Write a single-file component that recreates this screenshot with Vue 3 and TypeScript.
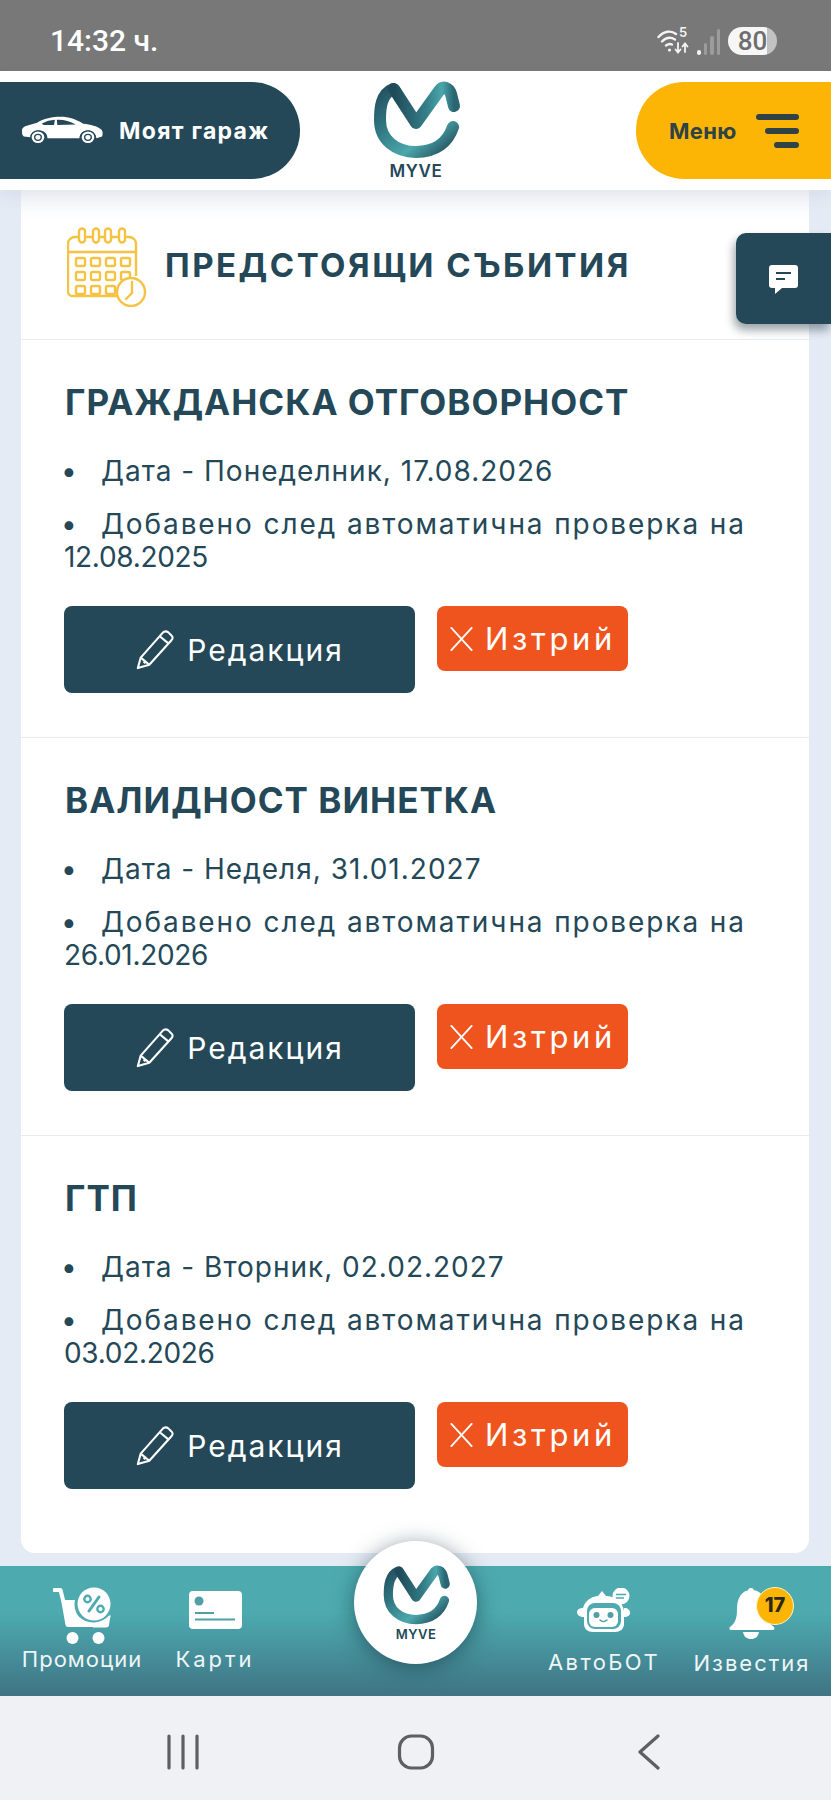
<template>
  <div class="phone" lang="bg">
    <svg class="defs" width="0" height="0" aria-hidden="true">
      <defs>
        <linearGradient id="myve-arc" x1="0" y1="0" x2="1" y2="1">
          <stop offset="0" stop-color="#24505f" />
          <stop offset="0.3" stop-color="#2f7480" />
          <stop offset="0.68" stop-color="#4ba8ab" />
          <stop offset="1" stop-color="#1f4656" />
        </linearGradient>
        <linearGradient id="myve-v" x1="0" y1="0" x2="1" y2="0">
          <stop offset="0" stop-color="#1f4a59" />
          <stop offset="0.55" stop-color="#35808a" />
          <stop offset="0.8" stop-color="#4aa6aa" />
          <stop offset="1" stop-color="#2a6572" />
        </linearGradient>
        <symbol id="myve-logo" viewBox="0 1 130 119">
          <path class="logo-stroke" stroke="url(#myve-arc)" d="M42 19C30 24 29 38 29 50C29 70 45 82 65 82C85 82 97 72 102 57" />
          <path class="logo-stroke" stroke="url(#myve-v)" d="M43 19L65 53L88 21C92 15 98 18 100 24L103 36" />
          <text class="logo-word" x="65" y="107" text-anchor="middle">MYVE</text>
        </symbol>
      </defs>
    </svg>

    <div class="status-bar">
      <span class="clock">14:32 ч.</span>
      <div class="status-icons">
        <svg class="wifi" width="34" height="26" viewBox="0 0 34 26" fill="none" stroke="#f4f4f4" stroke-linecap="round">
          <path stroke-width="2.4" d="M1.5 9C7 3 14 2 19 6" />
          <path stroke-width="2.4" d="M5 13.5C9 9.500 14 9 18 11.500" />
          <path stroke-width="2.4" d="M9 17.500C11 16 13 15.500 15 16.500" />
          <circle cx="12.500" cy="22" r="1.600" fill="#f4f4f4" stroke="none" />
          <path stroke-width="1.800" d="M21 15V24M18.500 21.500L21 24.500L23.500 21.500M28 24V16M25.500 18.500L28 15.500L30.500 18.500" />
        </svg>
        <span class="wifi-five">5</span>
        <div class="signal">
          <i class="bar bar-on" style="height: 5px"></i>
          <i class="bar" style="height: 12px"></i>
          <i class="bar" style="height: 19px"></i>
          <i class="bar" style="height: 26px"></i>
        </div>
        <div class="battery">80</div>
      </div>
    </div>

    <header class="top-bar">
      <button type="button" class="garage-btn">
        <svg width="83" height="29" viewBox="0 0 88 34" preserveAspectRatio="none">
          <path fill="#fff" d="M1 17C1 14 3 12 7 11L17 8C24 3 33 1 42 1C51 1 58 4 66 9C74 10 81 12 84 15C87 17 87 21 86 24L80 26C79 20 75 17 71 17C66 17 62 21 62 26H28C28 20 24 17 19 17C14 17 11 20 10 25L3 24C1 22 1 20 1 17Z" />
          <path fill="#244858" d="M22 9C27 6 31 5 36 4.500L35 10.500H24ZM38 4.400C45 4 52 6 58 10L38.500 10.500Z" />
          <circle cx="18" cy="25" r="7.500" fill="#fff" stroke="#244858" stroke-width="1.500" />
          <circle cx="18" cy="25" r="3.500" fill="none" stroke="#244858" stroke-width="1.500" />
          <circle cx="71" cy="25" r="7.500" fill="#fff" stroke="#244858" stroke-width="1.500" />
          <circle cx="71" cy="25" r="3.500" fill="none" stroke="#244858" stroke-width="1.500" />
        </svg>
        <span>Моят гараж</span>
      </button>
      <svg class="header-logo" width="130" height="119"><use href="#myve-logo" /></svg>
      <button type="button" class="menu-btn">
        <span>Меню</span>
        <span class="burger"><i class="b1"></i><i class="b2"></i><i class="b3"></i></span>
      </button>
    </header>

    <main class="content">
      <section class="card">
        <div class="card-head">
          <svg width="80" height="80" viewBox="0 0 80 80" fill="none" stroke="#f5c242" stroke-width="2.400">
            <path d="M12 10H8C4 10 1 13 1 17V65C1 67 3 69 5 69H50" />
            <path d="M1 25H69V49M69 25V17C69 13 66 10 62 10H58" />
            <path d="M18 10H26M32 10H38M44 10H52" />
            <rect x="12" y="1.500" width="6" height="14" rx="3" />
            <rect x="26" y="1.500" width="6" height="14" rx="3" />
            <rect x="38" y="1.500" width="6" height="14" rx="3" />
            <rect x="52" y="1.500" width="6" height="14" rx="3" />
            <g v-for="cell in calendarCells" :key="cell.x + '-' + cell.y">
              <rect :x="cell.x" :y="cell.y" width="9" height="8" rx="1.500" />
            </g>
            <circle cx="64" cy="65" r="14" fill="#fff" />
            <path stroke-linecap="round" d="M65 55V66L59 72" />
          </svg>
          <h1>ПРЕДСТОЯЩИ СЪБИТИЯ</h1>
        </div>

        <article v-for="item in events" :key="item.title" class="event">
          <h2>{{ item.title }}</h2>
          <ul>
            <li class="date-line">Дата - {{ item.date }}</li>
            <li class="check-line">Добавено след автоматична проверка на <span class="check-date">{{ item.added }}</span></li>
          </ul>
          <div class="actions">
            <button type="button" class="edit-btn">
              <svg width="40" height="40" viewBox="0 0 40 42" fill="none" stroke="#fff" stroke-width="2.200" stroke-linejoin="round">
                <path d="M2 40L5 29L28 3C30 1 32 1 34 2.500L37 5.500C39 7 39 9 37 11L14 36.500Z" />
                <path d="M5 29L14 36.500M25 6.500L34 14M8 33L10 35" />
              </svg>
              <span>Редакция</span>
            </button>
            <button type="button" class="delete-btn">
              <svg width="25" height="24" viewBox="0 0 26 26" stroke="#fff" stroke-width="2" stroke-linecap="round">
                <path d="M2 1L24 25M24 1L2 25" />
              </svg>
              <span>Изтрий</span>
            </button>
          </div>
        </article>
      </section>

      <button type="button" class="chat-tab" aria-label="Чат">
        <svg width="30" height="30" viewBox="0 0 30 30">
          <path fill="#fff" d="M3 1H26C28 1 29 2 29 4V21C29 23 28 24 26 24H13L6 30V24H3C1 24 0 23 0 21V4C0 2 1 1 3 1Z" />
          <path stroke="#244858" stroke-width="2" d="M7 9H22M7 15H16" />
        </svg>
      </button>
    </main>

    <nav class="bottom-nav">
      <a class="nav-item">
        <svg class="nav-icon" width="58" height="57" viewBox="0 0 58 57">
          <path fill="none" stroke="#fff" stroke-width="4" stroke-linecap="round" stroke-linejoin="round" d="M1.500 3H7.500L10 13" />
          <path fill="#fff" d="M8 13H40V40H15C13.500 40 13 39 12.500 38ZM40 30L57.500 28L56 38C56 39.500 55 40.500 53 40.500H40Z" />
          <circle cx="41" cy="17.500" r="19.500" fill="#4dabb0" />
          <circle cx="41" cy="17" r="16.500" fill="#fff" />
          <path fill="none" stroke="#4dabb0" stroke-width="3" d="M36 24L46 10" stroke-linecap="round" />
          <circle cx="34.500" cy="12" r="3.200" fill="none" stroke="#4dabb0" stroke-width="2.400" />
          <circle cx="47.500" cy="22" r="3.200" fill="none" stroke="#4dabb0" stroke-width="2.400" />
          <path fill="none" stroke="#fff" stroke-width="2" d="M26 31C34 39 49 38 57 29" />
          <circle cx="19.500" cy="51" r="6" fill="#fff" />
          <circle cx="45.500" cy="51" r="6" fill="#fff" />
        </svg>
        <span class="label-promo">Промоции</span>
      </a>
      <a class="nav-item">
        <svg class="nav-icon" width="53" height="38" viewBox="0 0 53 38" style="margin-top: 4px">
          <rect width="53" height="38" rx="4" fill="#fff" />
          <circle cx="10" cy="10" r="4.500" fill="#4f9fa5" />
          <path stroke="#4f9fa5" stroke-width="2" d="M6 22H25M6 28.500H46" />
        </svg>
        <span class="label-card">Карти</span>
      </a>
      <div></div>
      <a class="nav-item">
        <svg class="nav-icon" width="54" height="45" viewBox="0 0 54 45" style="margin-top: 1px">
          <circle cx="44" cy="8" r="8.500" fill="#fff" />
          <path stroke="#4dabb0" stroke-width="1.400" d="M39 6.500H49M39 10H47" />
          <path fill="#fff" d="M25 3L29 8C37 8 46 14 47 23L47 36C47 41 43 44 38 44H16C11 44 7 41 7 36V29C3 29 0 27 0 24.500C0 22 2 20 6 20C8 13 13 9 21 8Z" />
          <path fill="#fff" d="M47 20C51 20 53 22 53 25C53 27 51 29 47 29Z" />
          <rect x="10" y="15" width="34" height="26" rx="8" fill="#4dabb0" />
          <rect x="12" y="20" width="29" height="19" rx="6" fill="#fff" />
          <circle cx="19.500" cy="27" r="3" fill="#4f9fa5" />
          <circle cx="33.500" cy="27" r="3" fill="#4f9fa5" />
          <path fill="none" stroke="#4f9fa5" stroke-width="1.500" stroke-linecap="round" d="M23 32C25 34 28 34 30 32" />
        </svg>
        <span class="label-bot">АвтоБОТ</span>
      </a>
      <a class="nav-item">
        <span class="bell-wrap">
          <svg width="46" height="52" viewBox="0 0 46 52">
            <circle cx="22" cy="4" r="3" fill="#fff" />
            <path fill="#fff" d="M22 3C33 3 37 12 37 22C37 32 40 36 45 40C46 42 45 43 43 43H2C0 43 0 41 1 40C6 36 8 32 8 22C8 12 12 3 22 3Z" />
            <path fill="#fff" d="M14 45H30C29 50 26 52 22 52C18 52 15 50 14 45Z" />
          </svg>
          <span class="badge">17</span>
        </span>
        <span class="label-bell">Известия</span>
      </a>
      <button type="button" class="home-fab" aria-label="MYVE">
        <svg width="100" height="92"><use href="#myve-logo" /></svg>
      </button>
    </nav>

    <div class="system-nav">
      <svg width="34" height="36" viewBox="0 0 34 36" stroke="#5e5f61" stroke-width="3.200" stroke-linecap="round">
        <path d="M3 2V34M17 2V34M31 2V34" />
      </svg>
      <svg width="38" height="36" viewBox="0 0 38 36" fill="none" stroke="#5e5f61" stroke-width="3.200">
        <rect x="2.500" y="2" width="33" height="32" rx="12" />
      </svg>
      <svg width="24" height="36" viewBox="0 0 24 36" fill="none" stroke="#5e5f61" stroke-width="3.200" stroke-linecap="round" stroke-linejoin="round">
        <path d="M21 2L3 18L21 34" />
      </svg>
    </div>
  </div>
</template>

<script setup lang="ts">
interface EventItem {
  title: string;
  date: string;
  added: string;
}

const events: EventItem[] = [
  { title: "ГРАЖДАНСКА ОТГОВОРНОСТ", date: "Понеделник, 17.08.2026", added: "12.08.2025" },
  { title: "ВАЛИДНОСТ ВИНЕТКА", date: "Неделя, 31.01.2027", added: "26.01.2026" },
  { title: "ГТП", date: "Вторник, 02.02.2027", added: "03.02.2026" },
];

// calendar grid, last row is one short because the clock covers it
const calendarCells: { x: number; y: number }[] = [];
for (let row = 0; row < 3; row++) {
  for (let col = 0; col < (row === 2 ? 3 : 4); col++) {
    calendarCells.push({ x: 9 + col * 15, y: 31 + row * 14 });
  }
}
</script>

<style>
html,
body {
  margin: 0;
  background: #e4ebf5;
}
</style>

<style scoped>
.phone {
  height: 1800px;
  display: flex;
  flex-direction: column;
  overflow: hidden;
  font-family: Inter, "Noto Sans", "Liberation Sans", sans-serif;
  color: #244858;
}

.defs {
  position: absolute;
}

button {
  border: 0;
  font: inherit;
  cursor: pointer;
}

.status-bar {
  flex: 0 0 71px;
  background: #787878;
  display: flex;
  align-items: center;
  justify-content: space-between;
  padding: 18px 54px 8px 50px;
  box-sizing: border-box;
}

.clock {
  font-family: Roboto, sans-serif;
  font-size: 30px;
  font-weight: 500;
  color: #fff;
}

.status-icons {
  position: relative;
  display: flex;
  align-items: center;
}

.wifi-five {
  position: absolute;
  left: 22px;
  top: -3px;
  font-size: 13px;
  font-weight: 600;
  color: #f4f4f4;
}

.signal {
  display: flex;
  align-items: flex-end;
  gap: 3px;
  height: 28px;
  margin: 0 8px 0 6px;
}

.bar {
  display: block;
  width: 3.5px;
  background: #9c9c9c;
  border-radius: 2px;
}

.bar-on {
  background: #f4f4f4;
}

.battery {
  width: 49px;
  height: 28px;
  border-radius: 14px;
  background: linear-gradient(90deg, #f6f6f6 80%, #c2c2c2 80%);
  color: #6e6e6e;
  font-family: Roboto, sans-serif;
  font-size: 26px;
  font-weight: 500;
  line-height: 28px;
  text-align: center;
}

.top-bar {
  flex: 0 0 119px;
  box-sizing: border-box;
  position: relative;
  z-index: 2;
  background: #fff;
  display: grid;
  grid-template-columns: 1fr auto 1fr;
  align-items: center;
  box-shadow: 0 6px 16px rgba(60, 80, 100, 0.08);
}

.garage-btn {
  justify-self: start;
  width: 300px;
  height: 97px;
  border-radius: 0 48px 48px 0;
  background: #244858;
  color: #fff;
  display: flex;
  align-items: center;
  gap: 15px;
  padding: 0 0 0 21px;
  font-size: 23px;
  font-weight: 700;
  letter-spacing: 1.3px;
  white-space: nowrap;
}

.menu-btn {
  justify-self: end;
  width: 195px;
  height: 97px;
  border-radius: 48px 0 0 48px;
  background: #fdb505;
  color: #2f4346;
  display: flex;
  align-items: center;
  gap: 19px;
  padding: 0 0 0 33px;
  font-size: 22px;
  font-weight: 700;
  letter-spacing: 0.3px;
}

.burger {
  display: flex;
  flex-direction: column;
  align-items: flex-end;
  gap: 8px;
}

.burger i {
  display: block;
  height: 6px;
  border-radius: 3px;
  background: #2f4346;
}

.b1 {
  width: 43px;
}

.b2 {
  width: 34px;
}

.b3 {
  width: 25px;
}

.logo-stroke {
  fill: none;
  stroke-width: 12;
  stroke-linecap: round;
  stroke-linejoin: round;
}

.logo-word {
  font-family: Inter, "Noto Sans", sans-serif;
  font-size: 17px;
  font-weight: 600;
  letter-spacing: 0.6px;
  fill: #244858;
}

.content {
  position: relative;
  flex: 1;
  min-height: 0;
  padding: 0 22px 13px 21px;
  display: flex;
  flex-direction: column;
}

.card {
  flex: 1;
  background: #fff;
  border-radius: 0 0 14px 14px;
  overflow: hidden;
}

.card-head {
  height: 149px;
  box-sizing: border-box;
  display: flex;
  align-items: center;
  gap: 18px;
  padding: 0 0 0 46px;
  background: linear-gradient(#f1f4f8, #fff 30px);
}

.card-head svg {
  margin-top: 5px;
}

h1 {
  margin: 0;
  font-size: 33px;
  font-weight: 700;
  letter-spacing: 2.5px;
  color: #244858;
}

.event {
  border-top: 1px solid #e8ecf1;
  padding: 42px 43px 44px;
}

h2 {
  margin: 0;
  padding-left: 1px;
  font-size: 35px;
  line-height: 40px;
  font-weight: 700;
  letter-spacing: 1px;
  color: #244858;
}

ul {
  list-style: none;
  margin: 33px 0 32px;
  padding: 0;
}

li {
  font-size: 28px;
  line-height: 33px;
  color: #244858;
}

li + li {
  margin-top: 20px;
}

.date-line {
  letter-spacing: 1px;
}

.check-line {
  letter-spacing: 1.9px;
}

.check-date {
  letter-spacing: -0.3px;
}

li::before {
  content: "•";
  display: inline-block;
  width: 40px;
  margin-left: -3px;
  letter-spacing: 0;
}

.actions {
  display: flex;
  align-items: flex-start;
  gap: 22px;
}

.edit-btn {
  width: 351px;
  height: 87px;
  border-radius: 8px;
  background: #244858;
  color: #fff;
  display: flex;
  align-items: center;
  justify-content: center;
  gap: 12px;
  font-size: 30px;
  letter-spacing: 2px;
}

.delete-btn {
  width: 191px;
  height: 65px;
  border-radius: 8px;
  background: #f0541e;
  color: #fff;
  display: flex;
  align-items: center;
  justify-content: center;
  gap: 11px;
  padding: 0;
  font-size: 31px;
  letter-spacing: 3.6px;
}

.chat-tab {
  position: absolute;
  top: 43px;
  right: 0;
  width: 95px;
  height: 91px;
  padding: 0;
  border-radius: 10px 0 0 10px;
  background: #244858;
  box-shadow: -2px 6px 10px rgba(30, 50, 60, 0.45);
  display: flex;
  align-items: center;
  justify-content: center;
}

.bottom-nav {
  flex: 0 0 130px;
  position: relative;
  z-index: 3;
  display: grid;
  grid-template-columns: 164px 102px 1fr 138px 158px;
  background: linear-gradient(#4dabb0 0, #4dabb0 35%, #3f7485 100%);
}

.nav-item {
  display: flex;
  flex-direction: column;
  align-items: center;
  padding-top: 21px;
  color: #eef6f6;
  font-size: 22px;
  letter-spacing: 2px;
  white-space: nowrap;
}

.nav-item span {
  line-height: 28px;
}

.nav-icon {
  display: block;
}

.label-promo {
  margin-top: 1px;
  letter-spacing: 1px;
}

.label-card {
  margin-top: 16px;
  letter-spacing: 3px;
}

.label-bot {
  margin-top: 15px;
  letter-spacing: 2.4px;
}

.label-bell {
  margin-top: 10px;
}

.bell-wrap {
  position: relative;
  display: block;
  width: 46px;
  height: 52px;
}

.bell-wrap svg {
  display: block;
}

.badge {
  position: absolute;
  left: 27px;
  top: 0;
  width: 38px;
  height: 38px;
  box-sizing: border-box;
  border-radius: 50%;
  background: #fdb505;
  border: 1.500px solid #fff2c4;
  color: #2a2a1c;
  font-size: 20px;
  font-weight: 800;
  letter-spacing: 0;
  line-height: 35px !important;
  text-align: center;
}

.home-fab {
  position: absolute;
  left: 354px;
  top: -25px;
  width: 123px;
  height: 123px;
  padding: 0;
  border-radius: 50%;
  background: #fff;
  box-shadow: 0 4px 22px rgba(20, 50, 60, 0.55);
  display: flex;
  align-items: center;
  justify-content: center;
}

.system-nav {
  flex: 0 0 104px;
  background: #f0f1f4;
  display: grid;
  grid-template-columns: 233px 233px 233px;
  padding: 0 0 0 66px;
  justify-items: center;
  align-items: center;
}

.system-nav svg {
  margin-top: 7px;
}
</style>
